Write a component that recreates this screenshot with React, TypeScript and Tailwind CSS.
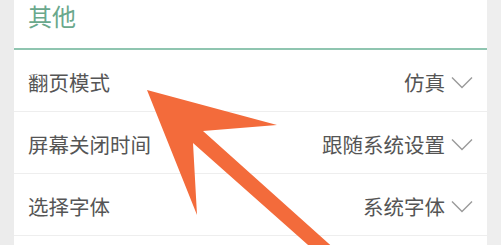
import React from "react";

const rows = [
  { label: "翻页模式", value: "仿真" },
  { label: "屏幕关闭时间", value: "跟随系统设置" },
  { label: "选择字体", value: "系统字体" },
];

function Chevron() {
  return (
    <svg width="22" height="13" viewBox="0 0 22 13" className="shrink-0">
      <polyline points="1,1.5 11,11.5 21,1.5" fill="none" stroke="#9a9a9a" strokeWidth="1.4" />
    </svg>
  );
}

export default function App() {
  return (
    <div
      className="relative flex h-[245px] w-[501px] overflow-hidden bg-[#eeeeee]"
      style={{ fontFamily: '"Noto Sans CJK SC", "Noto Sans", sans-serif' }}
    >
      <div className="w-[14px] shrink-0 bg-[#ececec]" />
      <div className="flex flex-1 flex-col bg-white">
        <div className="h-[50px] shrink-0 border-b-2 border-[#8fc5b0] pl-[14px]">
          <div className="pt-[1px] text-[24px] leading-[30px] text-[#6aa88c]">其他</div>
        </div>
        {rows.map((r) => (
          <div
            key={r.label}
            className="flex h-[62px] shrink-0 items-center justify-between border-b border-[#eeeeee] pl-[14px] pr-[14px] pt-[3px]"
          >
            <span className="text-[20.5px] text-[#555555]">{r.label}</span>
            <span className="flex items-center gap-[6px]">
              <span className="text-[20.5px] text-[#555555]">{r.value}</span>
              <Chevron />
            </span>
          </div>
        ))}
      </div>
      <div className="w-[14px] shrink-0 bg-[#eeeeee]" />
      <svg
        className="pointer-events-none absolute left-0 top-0"
        width="501"
        height="245"
        viewBox="0 0 501 245"
      >
        <polygon
          points="147,90 277,125 203,131 347,260 325,260 193,143 197,215"
          fill="#f36b3b"
        />
      </svg>
    </div>
  );
}
